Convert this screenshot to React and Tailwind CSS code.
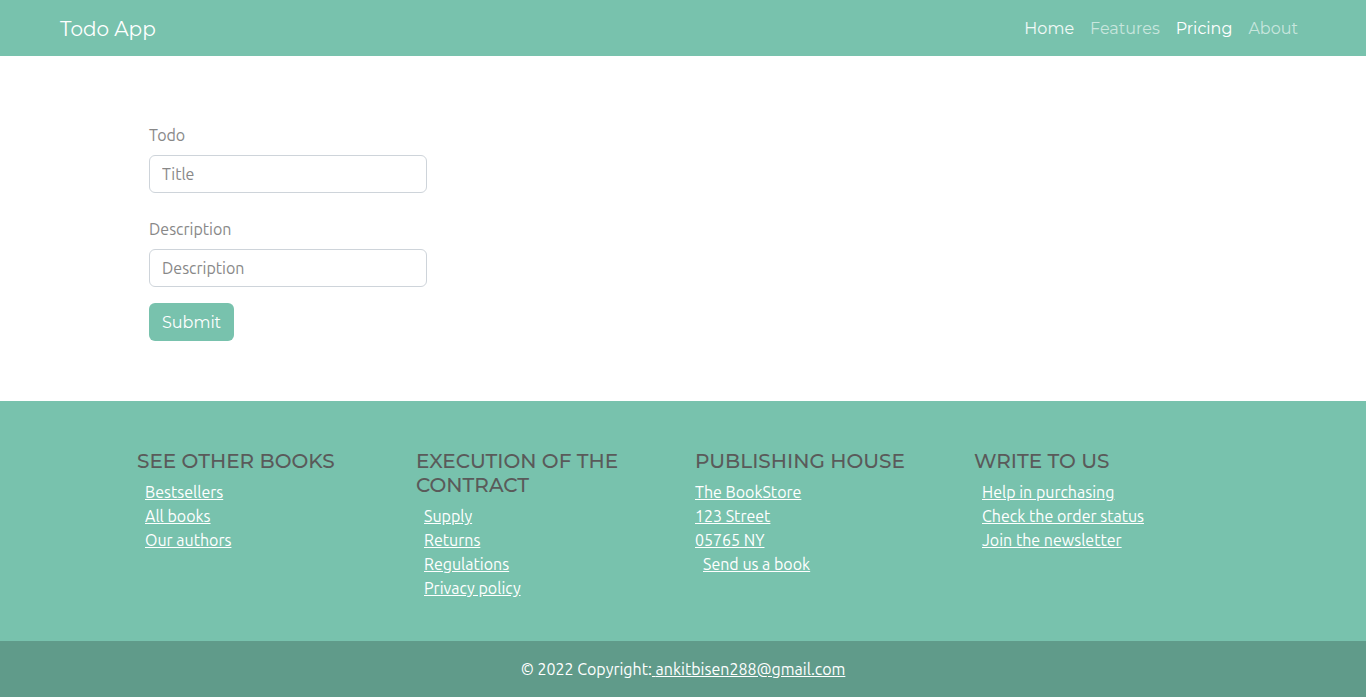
const heading = { fontFamily: "Montserrat, Inter, 'DejaVu Sans', sans-serif" };
const body = { fontFamily: "Ubuntu, 'Open Sans', 'Noto Sans', sans-serif" };

const columns = [
  {
    title: "See other books",
    links: [
      { label: "Bestsellers", indent: true },
      { label: "All books", indent: true },
      { label: "Our authors", indent: true },
    ],
  },
  {
    title: "Execution of the contract",
    links: [
      { label: "Supply", indent: true },
      { label: "Returns", indent: true },
      { label: "Regulations", indent: true },
      { label: "Privacy policy", indent: true },
    ],
  },
  {
    title: "Publishing house",
    links: [
      { label: "The BookStore" },
      { label: "123 Street" },
      { label: "05765 NY" },
      { label: "Send us a book", indent: true },
    ],
  },
  {
    title: "Write to us",
    links: [
      { label: "Help in purchasing", indent: true },
      { label: "Check the order status", indent: true },
      { label: "Join the newsletter", indent: true },
    ],
  },
];

function Navbar() {
  return (
    <nav className="h-14 bg-[#78c2ad] flex items-center justify-between px-[60px] pt-[1px]" style={heading}>
      <span className="text-white text-[20px]">Todo App</span>
      <ul className="flex items-center">
        <li><a href="#" className="px-2 text-white/90">Home</a></li>
        <li><a href="#" className="px-2 text-white/60">Features</a></li>
        <li><a href="#" className="px-2 text-white">Pricing</a></li>
        <li><a href="#" className="px-2 text-white/60">About</a></li>
      </ul>
    </nav>
  );
}

function TodoForm() {
  return (
    <div className="pt-[67px] pb-[60px] pl-[149px]" style={body}>
      <form className="w-[278px]" onSubmit={(e) => e.preventDefault()}>
        <div className="mb-6">
          <label className="block mb-2 text-[#888] text-base leading-6">Todo</label>
          <input
            type="text"
            placeholder="Title"
            className="w-full h-[38px] px-3 border border-[#ced4da] rounded-[6px] text-base text-[#888] placeholder:text-[#888] outline-none"
          />
        </div>
        <div className="mb-4">
          <label className="block mb-2 text-[#888] text-base leading-6">Description</label>
          <input
            type="text"
            placeholder="Description"
            className="w-full h-[38px] px-3 border border-[#ced4da] rounded-[6px] text-base text-[#888] placeholder:text-[#888] outline-none"
          />
        </div>
        <button
          type="submit"
          className="h-[38px] px-[13px] pt-[2px] bg-[#78c2ad] text-white rounded-[6px] text-base"
          style={heading}
        >
          Submit
        </button>
      </form>
    </div>
  );
}

function Footer() {
  return (
    <footer style={body}>
      <div className="bg-[#78c2ad] h-[240px] pt-[48px] pl-[137px]">
        <div className="flex">
          {columns.map((col) => (
            <div key={col.title} className="w-[279px] pr-6">
              <h5 className="uppercase font-medium text-[20px] leading-6 text-[#5a5a5a] mb-[7px] w-[240px]" style={heading}>
                {col.title}
              </h5>
              <ul>
                {col.links.map((l) => (
                  <li key={l.label} className={l.indent ? "pl-2 leading-6" : "leading-6"}>
                    <a href="#" className="text-white underline text-base">{l.label}</a>
                  </li>
                ))}
              </ul>
            </div>
          ))}
        </div>
      </div>
      <div className="bg-[#609b8a] h-14 flex items-center justify-center pb-[1px] text-white text-base">
        <p>
          © 2022 Copyright:<a href="#" className="underline text-white">{"\u00a0"}ankitbisen288@gmail.com</a>
        </p>
      </div>
    </footer>
  );
}

export default function App() {
  return (
    <div className="min-h-screen bg-white">
      <Navbar />
      <TodoForm />
      <Footer />
    </div>
  );
}
